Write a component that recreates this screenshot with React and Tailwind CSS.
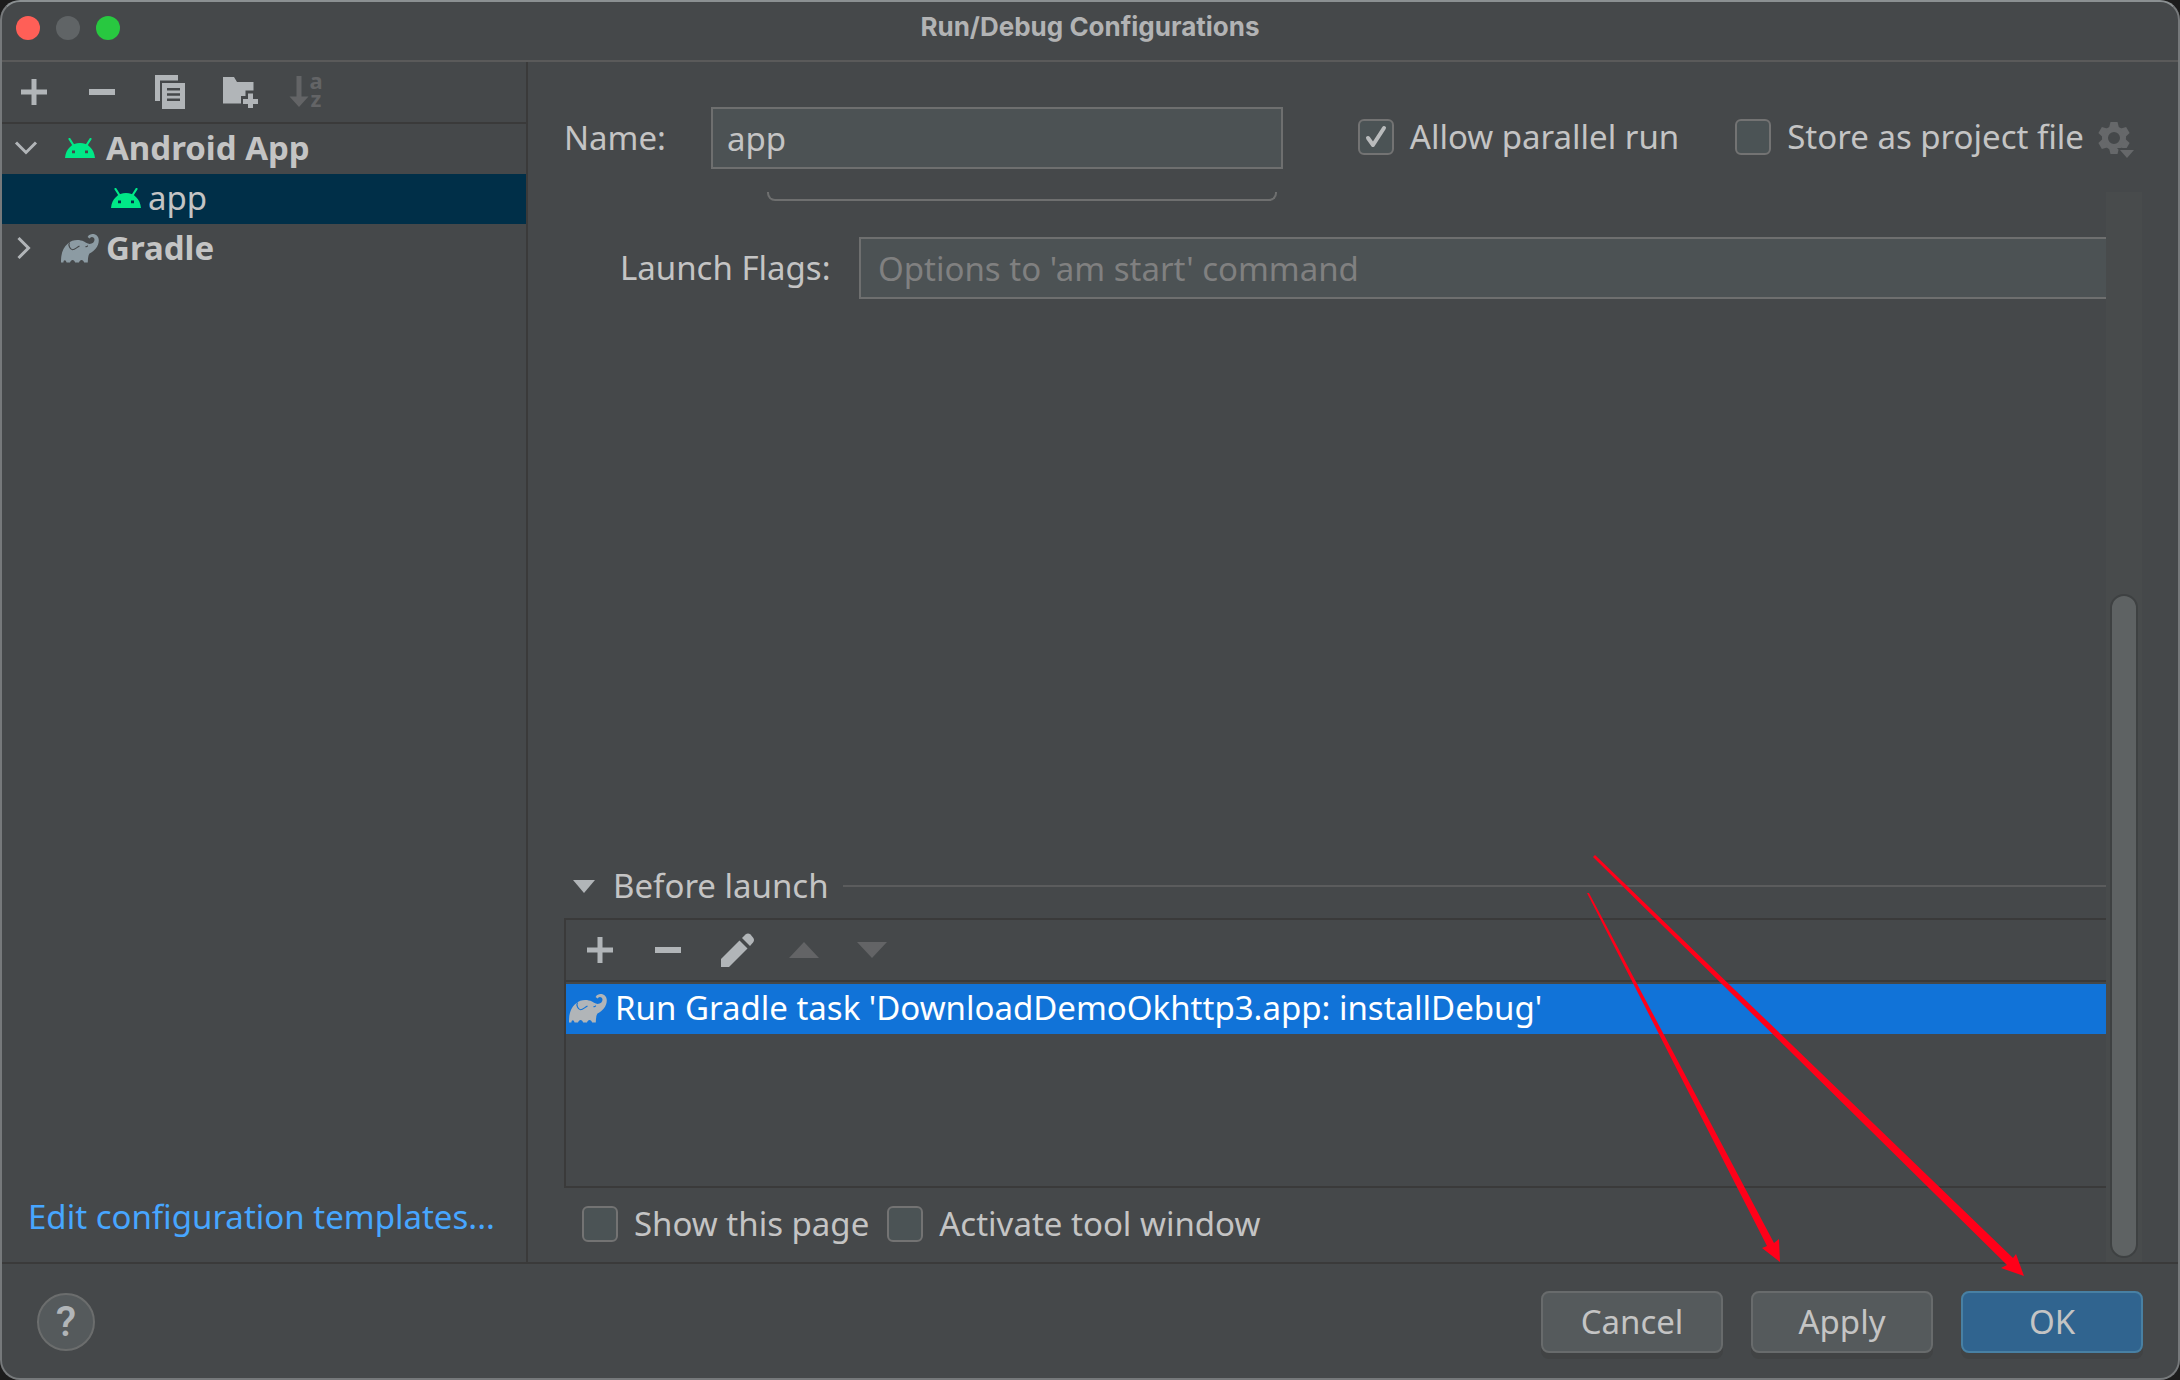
import React from "react";

const GradleIcon = ({ fill, line }) => (
  <svg width="38" height="29" viewBox="0 0 38 29" aria-hidden="true" className="shrink-0">
    <path
      fill={fill}
      d="M0 28.500C-.2 21 1.500 13.500 7 9.500C11 5.500 18 5 23 7.500C24.500 8.500 26.500 9.500 28.500 10C31.500 10 33.500 8 33.500 5.800C33.500 4 32.300 3 30.800 3C29.800 3.100 29.200 3.800 28.600 4.400L26.600 3C27.800 1 29.600 .1 31.600 .1C35.200 .1 37.800 2.700 37.800 6.300C37.800 12.500 33.500 17 28.500 19.500C27 21.500 27 25 26.800 28.500H23.200C22.600 27 21.800 26 20.600 26C19.300 26 18.500 27 18 28.500H14.200C13.600 27 12.800 26 11.600 26C10.400 26 9.600 27 9 28.500H5.600C5 27 4.600 26.200 3.800 26.200C3 26.200 2.500 27 2.400 28.500Z"
    />
    <path fill="none" stroke={line} strokeWidth="1.100" d="M8.500 8.500C7 11 9 15.500 11.500 15.800C14 15.800 15.500 13.500 18.500 12" />
    <path fill="none" stroke={line} strokeWidth="1.100" d="M24.500 12.500C25.500 13 26 12.600 26.800 11.600" />
  </svg>
);

const AndroidIcon = () => (
  <svg width="30" height="20" viewBox="0 0 30 20" aria-hidden="true" className="shrink-0">
    <path d="M4.500 1L8 6.500M25.500 1L22 6.500" stroke="#00e887" strokeWidth="2.200" strokeLinecap="round" />
    <path fill="#00e887" fillRule="evenodd" d="M0 20C.8 11 7 5 15 5S29.200 11 30 20ZM7 12.500V15.300H10V12.500ZM20 12.500V15.300H23V12.500Z" />
  </svg>
);

const PlusIcon = () => (
  <svg width="26" height="26" viewBox="0 0 26 26" fill="#b1b5b8" aria-hidden="true">
    <path d="M10.500 0H15.500V10.500H26V15.500H15.500V26H10.500V15.500H0V10.500H10.500Z" />
  </svg>
);
const MinusIcon = () => (
  <svg width="26" height="26" viewBox="0 0 26 26" fill="#b1b5b8" aria-hidden="true">
    <path d="M0 10H26V16H0Z" />
  </svg>
);
const CopyIcon = () => (
  <svg width="30" height="34" viewBox="0 0 30 34" aria-hidden="true">
    <path fill="#b1b5b8" d="M0 0H23V5.500H5V26H0Z" />
    <path fill="#b1b5b8" fillRule="evenodd" d="M7 8H30V34H7ZM12 13V15.500H25V13ZM12 18.200V20.700H25V18.200ZM12 23.500V26H25V23.500Z" />
  </svg>
);
const FolderIcon = () => (
  <svg width="40" height="32" viewBox="-5 -1 40 32" fill="#b1b5b8" aria-hidden="true">
    <path d="M0 0H11L14 5H30.500V13.500H22.500V19H18V26.500H0Z" />
    <path d="M25 16.500H30V22H35V27H30V31.500H25V27H20V22H25Z" />
  </svg>
);
const SortIcon = () => (
  <span className="flex items-center" aria-hidden="true">
    <svg width="20" height="32" viewBox="0 0 20 32" fill="#636466">
      <path d="M7.500 0H12.500V20.500H19.500L10 31L.5 20.500H7.500Z" />
    </svg>
    <span className="flex flex-col pb-1.5 text-[22px] leading-[18px] font-bold text-[#636466]">
      <span>a</span>
      <span>z</span>
    </span>
  </span>
);
const PencilIcon = () => (
  <svg width="38" height="34" viewBox="-4 0 38 34" fill="#b1b5b8" aria-hidden="true">
    <path d="M0 26L18.500 7.500L26.500 15.500L8 34H0Z" />
    <path d="M21 5L24.500 1.500Q27 -.5 29.500 1.500L32 4.500Q34 7 32 9.500L29 13Z" />
  </svg>
);
const GearIcon = () => (
  <svg width="38" height="38" viewBox="0 0 38 38" aria-hidden="true">
    <g transform="translate(16 17)" fill="#66686a">
      <path fillRule="evenodd" d="M0 -12A12 12 0 1 0 0 12A12 12 0 1 0 0 -12ZM0 -6A6 6 0 1 1 0 6A6 6 0 1 1 0 -6Z" />
      {[0, 60, 120, 180, 240, 300].map((a) => (
        <path key={a} transform={`rotate(${a})`} d="M-3.500 -16H3.500L5 -10H-5Z" />
      ))}
    </g>
    <path d="M19 27H38L29 38Z" fill="#45484a" />
    <path d="M22 29H36L29 37Z" fill="#66686a" />
  </svg>
);

function ToolButton({ label, disabled, children }) {
  return (
    <button type="button" aria-label={label} disabled={disabled} className="flex h-[60px] w-[68px] shrink-0 items-center justify-center">
      {children}
    </button>
  );
}

function Check({ id, label, defaultChecked }) {
  return (
    <div className="flex items-center gap-4">
      <span className="relative flex size-9 shrink-0">
        <input
          id={id}
          type="checkbox"
          defaultChecked={defaultChecked}
          className="peer size-9 appearance-none rounded-md border-2 border-[#737373] bg-[#4b5355]"
        />
        <svg viewBox="0 0 36 36" fill="none" stroke="#b9bbbc" strokeWidth="4" strokeLinecap="round" strokeLinejoin="round" className="pointer-events-none absolute inset-0 hidden peer-checked:block" aria-hidden="true">
          <path d="M10 19L15 26L26 9" />
        </svg>
      </span>
      <label htmlFor={id} className="whitespace-nowrap">{label}</label>
    </div>
  );
}

function Sidebar() {
  return (
    <aside className="flex w-[526px] shrink-0 flex-col border-r-2 border-[#3a3a3a]">
      <div role="toolbar" aria-label="Configurations" className="-ml-0.5 flex h-[62px] border-b-2 border-[#3a3a3a]">
        <ToolButton label="Add"><PlusIcon /></ToolButton>
        <ToolButton label="Remove"><MinusIcon /></ToolButton>
        <ToolButton label="Copy"><CopyIcon /></ToolButton>
        <ToolButton label="New folder"><FolderIcon /></ToolButton>
        <ToolButton label="Sort" disabled><SortIcon /></ToolButton>
      </div>
      <ul role="tree" aria-label="Run configurations" className="grow">
        <li role="treeitem" aria-expanded="true" className="flex h-[50px] items-center pb-0.5 pl-3 font-bold">
          <span className="flex w-[51px]">
            <svg width="24" height="14" viewBox="0 0 24 14" fill="none" stroke="#b1b5b8" strokeWidth="3" aria-hidden="true"><path d="M2 1.500L12 11.500L22 1.500" /></svg>
          </span>
          <span className="flex w-[41px]"><AndroidIcon /></span>
          Android App
        </li>
        <li role="treeitem" aria-selected="true" className="flex h-[50px] items-center bg-[#002f48] pb-0.5 pl-[109px]">
          <span className="flex w-[37px]"><AndroidIcon /></span>
          app
        </li>
        <li role="treeitem" aria-expanded="false" className="flex h-[50px] items-center pb-0.5 pl-[15px] font-bold">
          <span className="flex w-11">
            <svg width="14" height="24" viewBox="0 0 14 24" fill="none" stroke="#b1b5b8" strokeWidth="3" aria-hidden="true"><path d="M1.500 2L11.500 12L1.500 22" /></svg>
          </span>
          <span className="flex w-[45px]"><GradleIcon fill="#8c9ba3" line="#45484a" /></span>
          Gradle
        </li>
      </ul>
      <a href="#templates" className="mb-5 block pl-[26px] leading-[50px] whitespace-nowrap text-[#47a6ff]">Edit configuration templates...</a>
    </aside>
  );
}

function BeforeLaunch() {
  return (
    <section aria-labelledby="before" className="flex flex-col">
      <div className="flex h-16 items-center pl-[9px]">
        <svg width="22" height="13" viewBox="0 0 22 13" fill="#b1b5b8" aria-hidden="true"><path d="M0 0H22L11 13Z" /></svg>
        <h2 id="before" className="ml-[18px] whitespace-nowrap">Before launch</h2>
        <div className="ml-3.5 h-0.5 grow bg-[#5b5c5d]" />
      </div>
      <div className="h-[270px] border-y-2 border-l-2 border-[#3a3a3a]">
        <div role="toolbar" aria-label="Before launch tasks" className="flex h-[62px] border-b-2 border-[#3a3a3a]">
          <ToolButton label="Add task"><PlusIcon /></ToolButton>
          <ToolButton label="Remove task"><MinusIcon /></ToolButton>
          <ToolButton label="Edit task"><PencilIcon /></ToolButton>
          <ToolButton label="Move up" disabled>
            <svg width="30" height="16" viewBox="0 0 30 16" fill="#636466" aria-hidden="true"><path d="M0 16H30L15 0Z" /></svg>
          </ToolButton>
          <ToolButton label="Move down" disabled>
            <svg width="30" height="16" viewBox="0 0 30 16" fill="#636466" aria-hidden="true"><path d="M0 0H30L15 16Z" /></svg>
          </ToolButton>
        </div>
        <ul className="pt-0.5">
          <li className="flex h-[50px] items-center gap-2 bg-[#1173d8] pb-0.5 pl-[3px] whitespace-nowrap text-white">
            <GradleIcon fill="#b1b5b8" line="#1173d8" />
            Run Gradle task 'DownloadDemoOkhttp3.app: installDebug'
          </li>
        </ul>
      </div>
      <div className="flex h-[74px] items-center gap-[18px] pb-0.5 pl-[18px]">
        <Check id="show" label="Show this page" />
        <Check id="activate" label="Activate tool window" />
      </div>
    </section>
  );
}

function Arrows() {
  return (
    <svg width="440" height="424" viewBox="1586 854 440 424" fill="#ff0019" aria-hidden="true" className="pointer-events-none absolute right-[152px] bottom-[100px]">
      <path d="M1587 893L1589 893L1774 1243L1779 1239L1780 1262L1762 1248L1767 1246Z" />
      <path d="M1593 857L1595 855L2013 1258L2016 1254L2024 1276L2001 1268L2007 1265Z" />
    </svg>
  );
}

export default function App() {
  return (
    <div className="bg-[#1c1c1c]">
      <div className="relative flex min-h-screen flex-col overflow-hidden rounded-[20px] border-2 border-[#76797b] border-t-[#8b9092] bg-[#45484a] font-['Noto_Sans',sans-serif] text-[33px] leading-10 text-[#c4c4c4]">
        <header className="grid h-[60px] grid-cols-[1fr_auto_1fr] items-start border-b-2 border-[#5a5a5a]">
          <div className="flex gap-4 pt-3.5 pl-3.5">
            <button type="button" aria-label="Close" className="size-6 rounded-full bg-[#ff5f57]" />
            <button type="button" aria-label="Minimize" disabled className="size-6 rounded-full bg-[#606466]" />
            <button type="button" aria-label="Zoom" className="size-6 rounded-full bg-[#28c840]" />
          </div>
          <h1 className="pt-[5px] font-['Inter',sans-serif] text-[26px] font-bold text-[#b2b3b4]">Run/Debug Configurations</h1>
        </header>
        <div className="flex grow">
          <Sidebar />
          <main className="flex min-w-0 grow flex-col pl-9">
            <div className="flex h-[130px] items-start pt-[45px] pr-[42px]">
              <label htmlFor="name" className="w-[147px] pt-[11px]">Name:</label>
              <input id="name" type="text" defaultValue="app" className="h-[62px] min-w-0 flex-[0_1_572px] border-2 border-[#6e6f6f] bg-[#4c5254] px-3.5" />
              <div className="ml-auto flex items-start pt-2.5">
                <Check id="parallel" label="Allow parallel run" defaultChecked />
                <div className="w-14" />
                <Check id="store" label="Store as project file" />
                <button type="button" aria-label="Storage settings" disabled className="mt-1 ml-3.5"><GearIcon /></button>
              </div>
            </div>
            <div className="flex grow pr-9">
              <div className="flex min-w-0 grow flex-col">
                <div className="ml-[203px] h-[9px] w-[510px] rounded-b-lg border-2 border-t-0 border-[#6e6f6f]" />
                <div className="mt-9 flex items-center pl-14">
                  <label htmlFor="flags" className="w-[239px]">Launch Flags:</label>
                  <input id="flags" type="text" placeholder="Options to 'am start' command" className="h-[62px] min-w-0 grow border-2 border-r-0 border-[#6e6f6f] bg-[#4c5254] px-[17px] placeholder:text-[#808080]" />
                </div>
                <div className="min-h-10 grow" />
                <BeforeLaunch />
              </div>
              <div className="flex w-9 flex-col justify-end bg-[#484b4c] px-1 pb-1">
                <div className="h-[664px] rounded-full border-2 border-[#3e4142] bg-[#5e6263]" />
              </div>
            </div>
          </main>
        </div>
        <footer className="flex h-[116px] items-start gap-7 border-t-2 border-[#3a3a3a] pt-[27px] pr-[35px] pl-[35px]">
          <button type="button" aria-label="Help" className="mt-0.5 mr-auto size-[58px] rounded-full border-2 border-[#6b6d6d] bg-[#555a5c] font-['Roboto'] text-[42px] font-medium text-[#b1b5b8]">?</button>
          <button type="button" className="h-[62px] w-[182px] rounded-lg border-2 border-[#686b6c] bg-[#555a5c] shadow-[0_6px_0_#414344]">Cancel</button>
          <button type="button" className="h-[62px] w-[182px] rounded-lg border-2 border-[#686b6c] bg-[#555a5c] shadow-[0_6px_0_#414344]">Apply</button>
          <button type="button" className="h-[62px] w-[182px] rounded-lg border-2 border-[#4880a3] bg-[#30648f] shadow-[0_6px_0_#414344]">OK</button>
        </footer>
        <Arrows />
      </div>
    </div>
  );
}
